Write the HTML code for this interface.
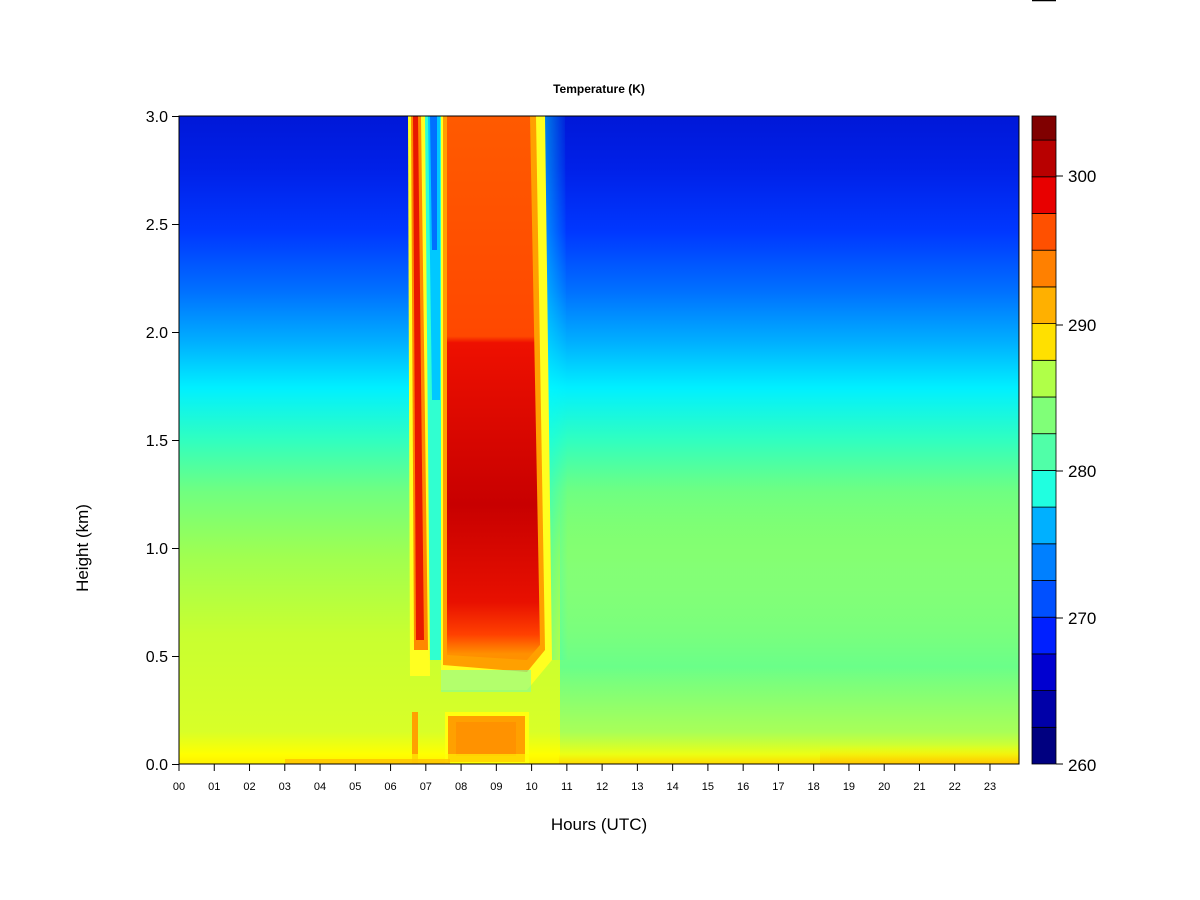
<!DOCTYPE html>
<html><head><meta charset="utf-8"><style>
html,body{margin:0;padding:0;background:#fff;width:1200px;height:900px;overflow:hidden}
svg text{font-family:"Liberation Sans",Arial,sans-serif}
</style></head><body>
<svg width="1200" height="900" viewBox="0 0 1200 900" xmlns="http://www.w3.org/2000/svg">
<defs>
<linearGradient id="bg" x1="0" y1="116" x2="0" y2="764" gradientUnits="userSpaceOnUse">
<stop offset="0" stop-color="#0018d8"/>
<stop offset="0.08" stop-color="#0020e8"/>
<stop offset="0.18" stop-color="#0038ff"/>
<stop offset="0.27" stop-color="#0070ff"/>
<stop offset="0.35" stop-color="#00b0ff"/>
<stop offset="0.42" stop-color="#00f0ff"/>
<stop offset="0.5" stop-color="#30ffc0"/>
<stop offset="0.58" stop-color="#70ff80"/>
<stop offset="0.68" stop-color="#a0ff50"/>
<stop offset="0.8" stop-color="#c8ff30"/>
<stop offset="0.95" stop-color="#d8ff28"/>
<stop offset="0.985" stop-color="#ffff00"/>
<stop offset="1" stop-color="#ffd800"/>
</linearGradient>
<linearGradient id="bgr" x1="0" y1="116" x2="0" y2="764" gradientUnits="userSpaceOnUse">
<stop offset="0" stop-color="#0010d0" stop-opacity="0"/>
<stop offset="0.55" stop-color="#60ff90" stop-opacity="0"/>
<stop offset="0.7" stop-color="#60ffa0" stop-opacity="0.5"/>
<stop offset="0.85" stop-color="#40ffb0" stop-opacity="0.7"/>
<stop offset="0.95" stop-color="#60ffa0" stop-opacity="0.4"/>
<stop offset="1" stop-color="#60ffa0" stop-opacity="0"/>
</linearGradient>
<linearGradient id="hot" x1="0" y1="116" x2="0" y2="764" gradientUnits="userSpaceOnUse">
<stop offset="0" stop-color="#ff5a00"/>
<stop offset="0.34" stop-color="#ff4800"/>
<stop offset="0.35" stop-color="#ee1000"/>
<stop offset="0.6" stop-color="#c80000"/>
<stop offset="0.75" stop-color="#e81000"/>
<stop offset="0.8" stop-color="#ff4000"/>
<stop offset="0.83" stop-color="#ff9000"/>
</linearGradient>
<linearGradient id="edge" x1="0" y1="0" x2="1" y2="0">
<stop offset="0" stop-color="#00ffff" stop-opacity="0.8"/>
<stop offset="1" stop-color="#00ffff" stop-opacity="0"/>
</linearGradient>
<linearGradient id="rt" x1="0" y1="116" x2="0" y2="764" gradientUnits="userSpaceOnUse">
<stop offset="0" stop-color="#c8ff30" stop-opacity="0"/>
<stop offset="0.5" stop-color="#c8ff30" stop-opacity="0"/>
<stop offset="0.97" stop-color="#ffff00" stop-opacity="0"/>
<stop offset="1" stop-color="#ffc000" stop-opacity="0.8"/>
</linearGradient>
</defs>
<rect x="179" y="116" width="840" height="648" fill="url(#bg)"/>
<rect x="560" y="116" width="459" height="648" fill="url(#bgr)"/>
<rect x="820" y="116" width="199" height="648" fill="url(#rt)"/>
<!-- left thin strip -->
<polygon points="408,116 427,116 430,676 410,676" fill="#ffff20"/>
<polygon points="411,116 421,116 428,650 414,650" fill="#ff8800"/>
<polygon points="413,116 418,116 424,640 416,640" fill="#e81800"/>
<polygon points="425,116 442,116 442,660 430,660" fill="#30ffd0"/>
<polygon points="428,116 440,116 440,400 432,400" fill="#00c8ff"/>
<polygon points="430,116 437,116 437,250 432,250" fill="#0070ff"/>
<!-- cyan halo right of column -->
<polygon points="538,116 565,116 568,660 548,660" fill="url(#edge)" opacity="0.7"/>
<!-- main hot column -->
<polygon points="441,116 545,116 552,660 527,690 441,690" fill="#ffff20"/>
<polygon points="443,116 536,116 545,650 527,672 443,665" fill="#ffa000"/>
<polygon points="447,116 530,116 540,645 527,660 447,655" fill="url(#hot)"/>
<rect x="441" y="670" width="90" height="22" fill="#80ffa0" opacity="0.6"/>
<!-- low orange block -->
<rect x="445" y="712" width="84" height="52" fill="#ffff10"/>
<rect x="448" y="716" width="77" height="46" fill="#ffa000"/>
<rect x="456" y="722" width="60" height="34" fill="#ff8800" opacity="0.6"/>
<rect x="412" y="712" width="6" height="52" fill="#ffa000"/>
<rect x="179" y="754" width="380" height="10" fill="#ffff00" opacity="0.6"/>
<rect x="285" y="759" width="165" height="5" fill="#ffc000" opacity="0.8"/>
<!-- axes -->
<rect x="179" y="116" width="840" height="648" fill="none" stroke="#000" stroke-width="1"/>
<g stroke="#000" stroke-width="1">
<line x1="172" y1="116.5" x2="179" y2="116.5"/><line x1="172" y1="224.5" x2="179" y2="224.5"/>
<line x1="172" y1="332.5" x2="179" y2="332.5"/><line x1="172" y1="440.5" x2="179" y2="440.5"/>
<line x1="172" y1="548.5" x2="179" y2="548.5"/><line x1="172" y1="656.5" x2="179" y2="656.5"/>
<line x1="172" y1="764.5" x2="179" y2="764.5"/>
</g>
<g font-size="16" text-anchor="end" fill="#000">
<text x="168" y="122">3.0</text><text x="168" y="230">2.5</text><text x="168" y="338">2.0</text>
<text x="168" y="446">1.5</text><text x="168" y="554">1.0</text><text x="168" y="662">0.5</text>
<text x="168" y="770">0.0</text>
</g>
<g id="xt" stroke="#000"></g>
<g font-size="11" text-anchor="middle" fill="#000" id="xl"></g>
<text x="599" y="830" font-size="17" text-anchor="middle">Hours (UTC)</text>
<text x="599" y="93" font-size="12" font-weight="bold" text-anchor="middle">Temperature (K)</text>
<text transform="translate(88,548) rotate(-90)" font-size="17" text-anchor="middle">Height (km)</text>
<g id="cb"></g>
<line x1="1032" y1="0.5" x2="1056" y2="0.5" stroke="#000" stroke-width="1.5"/>
<g font-size="17" fill="#000">
<text x="1068" y="182">300</text><text x="1068" y="331">290</text><text x="1068" y="477">280</text>
<text x="1068" y="624">270</text><text x="1068" y="771">260</text>
</g>
<g stroke="#000"><line x1="1056" y1="176" x2="1063" y2="176"/><line x1="1056" y1="325" x2="1063" y2="325"/>
<line x1="1056" y1="471" x2="1063" y2="471"/><line x1="1056" y1="618" x2="1063" y2="618"/><line x1="1056" y1="764" x2="1063" y2="764"/></g>
</svg>
<script>
var ns="http://www.w3.org/2000/svg";
var xt=document.getElementById('xt'),xl=document.getElementById('xl');
for(var h=0;h<24;h++){var x=179+35.26*h;
var l=document.createElementNS(ns,'line');l.setAttribute('x1',x);l.setAttribute('x2',x);l.setAttribute('y1',764);l.setAttribute('y2',771);xt.appendChild(l);
var t=document.createElementNS(ns,'text');t.setAttribute('x',x);t.setAttribute('y',790);t.textContent=(h<10?'0':'')+h;xl.appendChild(t);}
var cols=["#000080","#0000a8","#0000d0","#0000f0","#0020ff","#0050ff","#0080ff","#00b0ff","#00e0ff","#20ffe0","#50ffa8","#80ff78","#b0ff48","#e0ff18","#ffe000","#ffb000","#ff8000","#ff5000","#ff2000","#e80000","#b80000","#800000"];
var cb=document.getElementById('cb');var step=36.7;var y=764;var i=0;
while(y>116){var y2=Math.max(116,y-step);var r=document.createElementNS(ns,'rect');
r.setAttribute('x',1032);r.setAttribute('y',y2);r.setAttribute('width',24);r.setAttribute('height',y-y2);
var idx=Math.round(i*(cols.length-1)/17);r.setAttribute('fill',cols[Math.min(idx,cols.length-1)]);r.setAttribute('stroke','#000');r.setAttribute('stroke-width','0.8');cb.appendChild(r);y=y2;i++;}
</script>
</body></html>
